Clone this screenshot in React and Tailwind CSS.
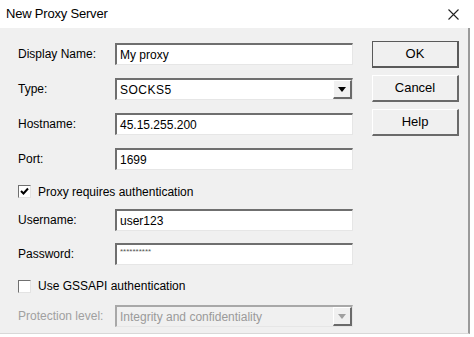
import React from "react";

const font = { fontFamily: '"Liberation Sans", Arial, sans-serif' };

function Label({ children, disabled }) {
  return (
    <div className={`w-[97px] shrink-0 text-[12px] ${disabled ? "text-[#a0a0a0]" : "text-black"}`}>
      {children}
    </div>
  );
}

function Field({ children, className = "" }) {
  return (
    <div
      className={`w-[238px] h-[22px] flex items-center bg-white border-t-2 border-l-2 border-b border-r border-t-[#6f6f6f] border-l-[#6f6f6f] border-b-[#e6e6e6] border-r-[#e6e6e6] pl-[3px] text-[12px] ${className}`}
    >
      {children}
    </div>
  );
}

function Row({ label, children, className = "", disabled }) {
  return (
    <div className={`flex items-center h-[22px] ${className}`}>
      <Label disabled={disabled}>{label}</Label>
      {children}
    </div>
  );
}

function Arrow({ disabled }) {
  return (
    <div className="ml-auto w-[19px] h-[19px] flex items-center justify-center bg-[#f0f0f0] border-t border-l border-b-2 border-r-2 border-t-white border-l-white border-b-[#6a6a6a] border-r-[#6a6a6a]">
      <svg width="8" height="5" viewBox="0 0 8 5">
        <polygon points="0,0 8,0 4,5" fill={disabled ? "#a0a0a0" : "#000"} />
      </svg>
    </div>
  );
}

function Checkbox({ checked }) {
  return (
    <div className="w-[13px] h-[13px] bg-white border-t border-l border-b border-r border-t-[#707070] border-l-[#707070] border-b-[#e3e3e3] border-r-[#e3e3e3] flex items-center justify-center">
      {checked && (
        <svg width="9" height="9" viewBox="0 0 9 9">
          <path d="M1 4 L3.5 6.5 L8 1.5" stroke="#000" strokeWidth="2" fill="none" />
        </svg>
      )}
    </div>
  );
}

function Button({ children, isDefault }) {
  return (
    <div
      className={`w-[87px] h-[27px] flex items-center justify-center text-[13px] text-black bg-[#f0f0f0] ${
        isDefault
          ? "border border-[#5a5a5a] border-b-2 border-r-2"
          : "border-t border-l border-b-2 border-r-2 border-t-white border-l-white border-b-[#6a6a6a] border-r-[#6a6a6a]"
      }`}
    >
      {children}
    </div>
  );
}

export default function App() {
  return (
    <div className="w-[474px] h-[337px] bg-white flex flex-col overflow-hidden" style={font}>
      <div className="h-[28px] flex items-center justify-between pl-[6px] pr-[15px] shrink-0">
        <span className="text-[13px] tracking-[-0.2px] text-black">New Proxy Server</span>
        <svg width="11" height="11" viewBox="0 0 11 11">
          <path d="M0.5 0.5 L10.5 10.5 M10.5 0.5 L0.5 10.5" stroke="#222" strokeWidth="1.1" />
        </svg>
      </div>
      <div className="w-[470px] h-[306px] bg-[#f0f0f0] border-r-2 border-r-[#9a9a9a] border-b border-b-[#d8d8d8] flex">
        <div className="flex flex-col pl-[18px] pt-[15px] w-[372px]">
          <Row label="Display Name:">
            <Field>My proxy</Field>
          </Row>
          <Row label="Type:" className="mt-[13px]">
            <Field className="pr-0">
              <span className="tracking-[0.5px]">SOCKS5</span>
              <Arrow />
            </Field>
          </Row>
          <Row label="Hostname:" className="mt-[13px]">
            <Field>45.15.255.200</Field>
          </Row>
          <Row label="Port:" className="mt-[13px]">
            <Field>1699</Field>
          </Row>
          <div className="flex items-center h-[13px] mt-[15px] gap-[7px]">
            <Checkbox checked />
            <span className="text-[12px]">Proxy requires authentication</span>
          </div>
          <Row label="Username:" className="mt-[11px]">
            <Field>user123</Field>
          </Row>
          <Row label="Password:" className="mt-[12px]">
            <Field>
              <span className="text-[8px] text-[#555] leading-none -mt-[5px]">**********</span>
            </Field>
          </Row>
          <div className="flex items-center h-[14px] mt-[14px] gap-[7px]">
            <Checkbox />
            <span className="text-[12px]">Use GSSAPI authentication</span>
          </div>
          <Row label="Protection level:" className="mt-[12px]" disabled>
            <Field className="pr-0 !bg-[#f0f0f0] text-[#9a9a9a] !border-t-[#a8a8a8] !border-l-[#a8a8a8]">
              <span>Integrity and confidentiality</span>
              <Arrow disabled />
            </Field>
          </Row>
        </div>
        <div className="flex flex-col pt-[13px] gap-[7px]">
          <Button isDefault>OK</Button>
          <Button>Cancel</Button>
          <Button>Help</Button>
        </div>
      </div>
    </div>
  );
}
